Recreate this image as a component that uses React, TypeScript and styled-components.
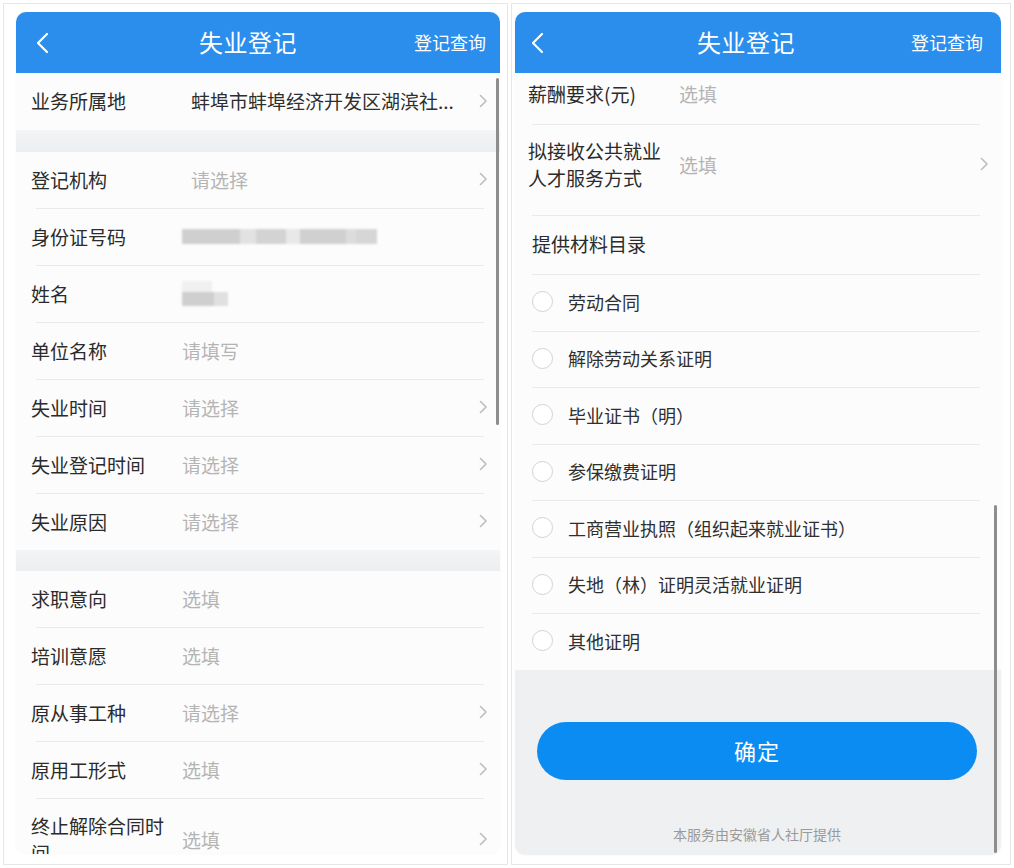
import React from 'react';
import styled, { createGlobalStyle } from 'styled-components';

const GlobalStyle = createGlobalStyle`
  html, body {
    margin: 0;
    padding: 0;
    background: #ffffff;
  }
  body {
    font-family: "Noto Sans CJK SC", "Noto Sans", sans-serif;
    color: #2b2b2b;
  }
`;

const Page = styled.div`
  display: flex;
  gap: 3px;
  padding: 3px 3px 2px 3px;
  width: 1014px;
  height: 868px;
  box-sizing: border-box;
`;

const Card = styled.div<{ $w: number; $pl: number; $pr: number }>`
  width: ${(p) => p.$w}px;
  height: 862px;
  box-sizing: border-box;
  border: 1px solid #e6e6e6;
  padding: 8px ${(p) => p.$pr}px 0 ${(p) => p.$pl}px;
`;

const Screen = styled.div<{ $w: number; $h: number }>`
  position: relative;
  width: ${(p) => p.$w}px;
  height: ${(p) => p.$h}px;
  border-radius: 10px;
  overflow: hidden;
  background: #fcfcfc;
  display: flex;
  flex-direction: column;
  box-shadow: 0 0 2px rgba(0, 0, 0, 0.06);
`;

const Header = styled.div<{ $h: number }>`
  flex: none;
  height: ${(p) => p.$h}px;
  background: #2b8dec;
  display: flex;
  align-items: center;
  color: #fff;
  position: relative;
  z-index: 2;
`;

const BackBox = styled.div<{ $pl: number }>`
  width: 66px;
  box-sizing: border-box;
  padding-left: ${(p) => p.$pl}px;
  display: flex;
  align-items: center;
`;

const Title = styled.div`
  flex: 1;
  text-align: center;
  font-size: 24px;
  letter-spacing: 0.5px;
  padding-bottom: 2px;
`;

const HeaderLink = styled.div<{ $pr: number }>`
  font-size: 18px;
  padding-right: ${(p) => p.$pr}px;
  padding-bottom: 2px;
`;

const Body = styled.div`
  flex: 1;
  overflow: hidden;
  display: flex;
  flex-direction: column;
`;

const Scrolled = styled.div<{ $offset: number }>`
  margin-top: ${(p) => -p.$offset}px;
  display: flex;
  flex-direction: column;
`;

const Row = styled.div<{ $h?: number; $pt?: number; $pb?: number; $pl?: number }>`
  display: flex;
  align-items: center;
  flex: none;
  min-height: ${(p) => p.$h ?? 56}px;
  box-sizing: border-box;
  padding: ${(p) => p.$pt ?? 0}px 12px ${(p) => p.$pb ?? 2}px ${(p) => p.$pl ?? 15}px;
`;

const Label = styled.div<{ $w?: number }>`
  flex: none;
  width: ${(p) => p.$w ?? 151}px;
  font-size: 19px;
  line-height: 27px;
  color: #2b2b2b;
  padding-right: 10px;
  box-sizing: border-box;
  word-break: break-all;
`;

const Value = styled.div<{ $dark?: boolean }>`
  flex: 1;
  min-width: 0;
  font-size: 19px;
  line-height: 27px;
  color: ${(p) => (p.$dark ? '#2e2e2e' : '#b4b4b4')};
  white-space: nowrap;
  overflow: hidden;
`;

const Divider = styled.div<{ $l?: number; $r?: number }>`
  flex: none;
  height: 1px;
  background: #e9e9e9;
  margin: 0 ${(p) => p.$r ?? 16}px 0 ${(p) => p.$l ?? 20}px;
`;

const Gap = styled.div<{ $h: number }>`
  flex: none;
  height: ${(p) => p.$h}px;
  background: linear-gradient(#f3f4f6, #eceef0);
`;

const Blur = styled.div`
  display: flex;
  flex-direction: column;
  filter: blur(1.2px);
`;

const BlurLine = styled.div`
  display: flex;
`;

const BlurSeg = styled.div<{ $w: number; $h: number; $c: string }>`
  width: ${(p) => p.$w}px;
  height: ${(p) => p.$h}px;
  background: ${(p) => p.$c};
`;

const SectionTitle = styled.div`
  font-size: 19px;
  color: #2b2b2b;
`;

const Radio = styled.span`
  flex: none;
  width: 19px;
  height: 19px;
  border-radius: 50%;
  border: 1px solid #d3d3d3;
  background: #fff;
  margin-right: 15px;
`;

const RadioText = styled.span`
  font-size: 18px;
  color: #2f2f2f;
`;

const Footer = styled.div`
  flex: 1;
  background: #eff0f2;
  display: flex;
  flex-direction: column;
  align-items: center;
  padding: 52px 24px 0 22px;
`;

const ConfirmButton = styled.button`
  width: 100%;
  height: 58px;
  border: none;
  border-radius: 29px;
  background: #0b8cf2;
  color: #fff;
  font-family: inherit;
  font-size: 22px;
  letter-spacing: 1px;
  padding-bottom: 3px;
`;

const Provider = styled.div`
  margin-top: 44px;
  font-size: 14px;
  color: #9a9a9a;
`;

const ScrollThumb = styled.div<{ $top: number; $h: number; $r: number }>`
  position: absolute;
  top: ${(p) => p.$top}px;
  right: ${(p) => p.$r}px;
  width: 3px;
  height: ${(p) => p.$h}px;
  border-radius: 2px;
  background: #8d8d8d;
  z-index: 3;
`;

const BackIcon = () => (
  <svg width="14" height="22" viewBox="0 0 14 22" fill="none">
    <polyline points="12,2 3,11 12,20" stroke="#fff" strokeWidth="2.2" strokeLinecap="round" strokeLinejoin="round" />
  </svg>
);

const Chevron = () => (
  <svg width="9" height="14" viewBox="0 0 9 14" fill="none">
    <polyline points="1.5,1.5 7,7 1.5,12.5" stroke="#bdbdbd" strokeWidth="1.6" strokeLinecap="round" strokeLinejoin="round" />
  </svg>
);

const PhoneHeader = ({ backPl, linkPr }: { backPl: number; linkPr: number }) => (
  <Header $h={61}>
    <BackBox $pl={backPl}>
      <BackIcon />
    </BackBox>
    <Title>失业登记</Title>
    <HeaderLink $pr={linkPr}>登记查询</HeaderLink>
  </Header>
);

type Field = { label: string; value: string; arrow?: boolean; w?: number; dark?: boolean };

const FieldRow = ({ f }: { f: Field }) => (
  <Row>
    <Label $w={f.w}>{f.label}</Label>
    <Value $dark={f.dark}>{f.value}</Value>
    {f.arrow && <Chevron />}
  </Row>
);

const section2: Field[] = [
  { label: '登记机构', value: '请选择', arrow: true, w: 160 },
  { label: '身份证号码', value: '' },
  { label: '姓名', value: '' },
  { label: '单位名称', value: '请填写' },
  { label: '失业时间', value: '请选择', arrow: true },
  { label: '失业登记时间', value: '请选择', arrow: true },
  { label: '失业原因', value: '请选择', arrow: true },
];

const section3: Field[] = [
  { label: '求职意向', value: '选填' },
  { label: '培训意愿', value: '选填' },
  { label: '原从事工种', value: '请选择', arrow: true },
  { label: '原用工形式', value: '选填', arrow: true },
];

const materials = [
  '劳动合同',
  '解除劳动关系证明',
  '毕业证书（明）',
  '参保缴费证明',
  '工商营业执照（组织起来就业证书）',
  '失地（林）证明灵活就业证明',
  '其他证明',
];

const IdBlur = () => (
  <Blur>
    <BlurLine>
      <BlurSeg $w={58} $h={15} $c="#cfcfcf" />
      <BlurSeg $w={16} $h={15} $c="#e2e2e2" />
      <BlurSeg $w={30} $h={15} $c="#d3d3d3" />
      <BlurSeg $w={14} $h={15} $c="#e8e8e8" />
      <BlurSeg $w={46} $h={15} $c="#d0d0d0" />
      <BlurSeg $w={10} $h={15} $c="#dcdcdc" />
      <BlurSeg $w={21} $h={15} $c="#d6d6d6" />
    </BlurLine>
  </Blur>
);

const NameBlur = () => (
  <Blur>
    <BlurLine>
      <BlurSeg $w={30} $h={11} $c="#f0f0f0" />
    </BlurLine>
    <BlurLine>
      <BlurSeg $w={32} $h={14} $c="#cfcfcf" />
      <BlurSeg $w={14} $h={14} $c="#e0e0e0" />
    </BlurLine>
  </Blur>
);

const LeftPhone = () => (
  <Screen $w={484} $h={842}>
    <PhoneHeader backPl={19} linkPr={14} />
    <Body>
      <Row $h={57}>
        <Label $w={160}>业务所属地</Label>
        <Value $dark>蚌埠市蚌埠经济开发区湖滨社...</Value>
        <Chevron />
      </Row>
      <Gap $h={22} />
      {section2.map((f, i) => (
        <React.Fragment key={f.label}>
          {i > 0 && <Divider />}
          {f.label === '身份证号码' ? (
            <Row>
              <Label>{f.label}</Label>
              <IdBlur />
            </Row>
          ) : f.label === '姓名' ? (
            <Row>
              <Label>{f.label}</Label>
              <NameBlur />
            </Row>
          ) : (
            <FieldRow f={f} />
          )}
        </React.Fragment>
      ))}
      <Gap $h={21} />
      {section3.map((f) => (
        <React.Fragment key={f.label}>
          <FieldRow f={f} />
          <Divider />
        </React.Fragment>
      ))}
      <Row $pt={13} $pb={14}>
        <Label $w={151}>终止解除合同时间</Label>
        <Value>选填</Value>
        <Chevron />
      </Row>
    </Body>
    <ScrollThumb $top={66} $h={347} $r={1} />
  </Screen>
);

const RightPhone = () => (
  <Screen $w={486} $h={843}>
    <PhoneHeader backPl={15} linkPr={18} />
    <Body>
      <Scrolled $offset={6}>
        <Row $h={57} $pl={13} $pb={4}>
          <Label>薪酬要求(元)</Label>
          <Value>选填</Value>
        </Row>
        <Divider $l={17} $r={21} />
        <Row $pt={12} $pb={24} $pl={13}>
          <Label>拟接收公共就业人才服务方式</Label>
          <Value>选填</Value>
          <Chevron />
        </Row>
        <Divider $l={17} $r={21} />
        <Row $h={58} $pl={17} $pb={4}>
          <SectionTitle>提供材料目录</SectionTitle>
        </Row>
        {materials.map((m) => (
          <React.Fragment key={m}>
            <Divider $l={17} $r={21} />
            <Row $h={55.5} $pl={17}>
              <Radio />
              <RadioText>{m}</RadioText>
            </Row>
          </React.Fragment>
        ))}
      </Scrolled>
      <Footer>
        <ConfirmButton>确定</ConfirmButton>
        <Provider>本服务由安徽省人社厅提供</Provider>
      </Footer>
    </Body>
    <ScrollThumb $top={493} $h={348} $r={4} />
  </Screen>
);

export default function App() {
  return (
    <>
      <GlobalStyle />
      <Page>
        <Card $w={505} $pl={12} $pr={7}>
          <LeftPhone />
        </Card>
        <Card $w={500} $pl={3} $pr={9}>
          <RightPhone />
        </Card>
      </Page>
    </>
  );
}
